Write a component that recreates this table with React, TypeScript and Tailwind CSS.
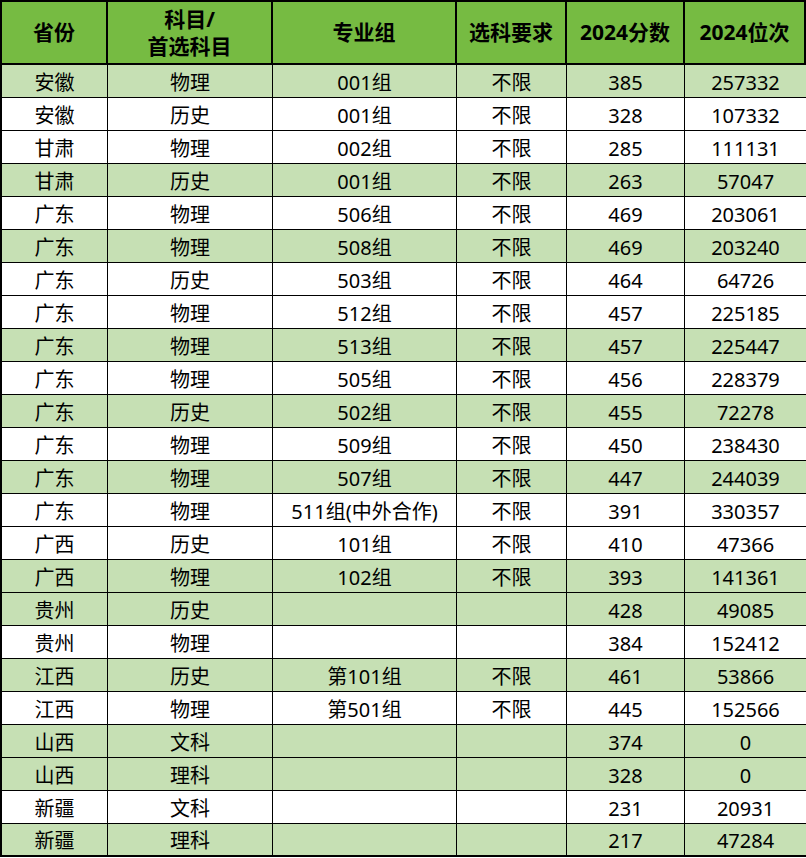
const rows: [string, string, string, string, string, string, boolean][] = [
  ['安徽', '物理', '001组', '不限', '385', '257332', true],
  ['安徽', '历史', '001组', '不限', '328', '107332', false],
  ['甘肃', '物理', '002组', '不限', '285', '111131', false],
  ['甘肃', '历史', '001组', '不限', '263', '57047', true],
  ['广东', '物理', '506组', '不限', '469', '203061', false],
  ['广东', '物理', '508组', '不限', '469', '203240', true],
  ['广东', '历史', '503组', '不限', '464', '64726', false],
  ['广东', '物理', '512组', '不限', '457', '225185', false],
  ['广东', '物理', '513组', '不限', '457', '225447', true],
  ['广东', '物理', '505组', '不限', '456', '228379', false],
  ['广东', '历史', '502组', '不限', '455', '72278', true],
  ['广东', '物理', '509组', '不限', '450', '238430', false],
  ['广东', '物理', '507组', '不限', '447', '244039', true],
  ['广东', '物理', '511组(中外合作)', '不限', '391', '330357', false],
  ['广西', '历史', '101组', '不限', '410', '47366', false],
  ['广西', '物理', '102组', '不限', '393', '141361', true],
  ['贵州', '历史', '', '', '428', '49085', true],
  ['贵州', '物理', '', '', '384', '152412', false],
  ['江西', '历史', '第101组', '不限', '461', '53866', true],
  ['江西', '物理', '第501组', '不限', '445', '152566', false],
  ['山西', '文科', '', '', '374', '0', true],
  ['山西', '理科', '', '', '328', '0', true],
  ['新疆', '文科', '', '', '231', '20931', false],
  ['新疆', '理科', '', '', '217', '47284', true],
]

const grid = 'grid grid-cols-[106px_165px_184px_110px_118px_121px]'

export default function App() {
  return (
    <div
      className="w-[806px] border-l-2 border-b-2 border-black text-black text-[20px]"
      style={{ fontFamily: '"Noto Sans", "Noto Sans CJK SC", sans-serif' }}
    >
      {/* header */}
      <div className={`${grid} h-[65px] bg-[#76bb42] border-t-2 border-black font-bold text-[21px]`}>
        <div className="flex items-center justify-center border-r-2 border-b-2 border-black">省份</div>
        <div className="flex flex-col items-center justify-center border-r-2 border-b-2 border-black leading-[27px]">
          <span>科目/</span>
          <span>首选科目</span>
        </div>
        <div className="flex items-center justify-center border-r-2 border-b-2 border-black">专业组</div>
        <div className="flex items-center justify-center border-r-2 border-b-2 border-black">选科要求</div>
        <div className="flex items-center justify-center border-r-2 border-b-2 border-black">2024分数</div>
        <div className="flex items-center justify-center border-r-2 border-b-2 border-black">2024位次</div>
      </div>
      {rows.map((r, i) => {
        const last = i === rows.length - 1
        return (
          <div
            key={i}
            className={`${grid} ${last ? 'h-[31px]' : 'h-[33px] border-b border-black'} ${r[6] ? 'bg-[#c6e0b4]' : 'bg-white'}`}
          >
            {r.slice(0, 6).map((c, j) => (
              <div
                key={j}
                className={`flex items-center justify-center pt-[3px] leading-none ${j < 5 ? 'border-r border-black' : ''}`}
              >
                {c as string}
              </div>
            ))}
          </div>
        )
      })}
    </div>
  )
}
